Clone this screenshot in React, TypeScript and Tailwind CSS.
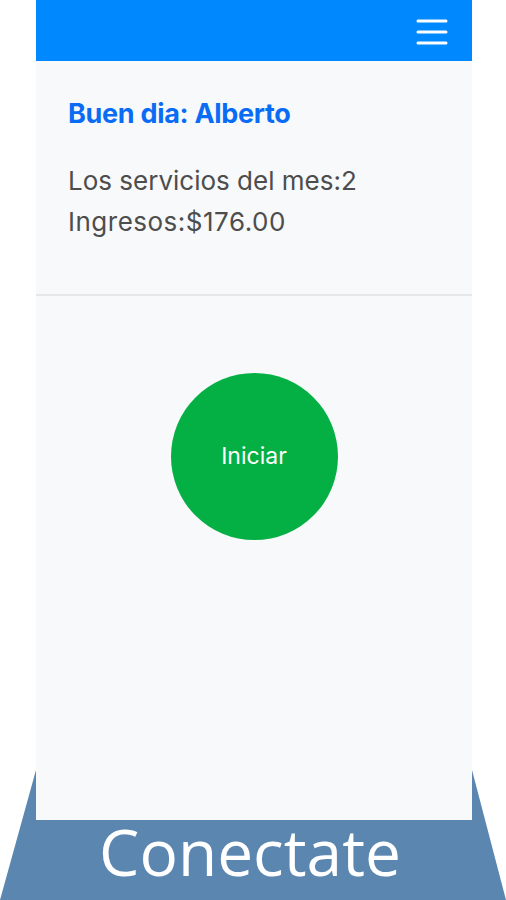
import React from "react";

export default function App() {
  return (
    <div className="relative w-[506px] h-[900px] bg-white overflow-hidden" style={{ fontFamily: 'Inter, "Liberation Sans", Arial, sans-serif' }}>
      <svg className="absolute left-0 top-0" width="506" height="900" viewBox="0 0 506 900">
        <polygon points="36,770 472,770 506,900 0,900" fill="#5a86b0" />
      </svg>
      <div className="relative flex flex-col">
        <div className="ml-[36px] w-[436px] h-[820px] bg-[#f8f9fb] flex flex-col">
          <div className="h-[61px] bg-[#0088ff] flex items-center justify-end pr-[24px] shrink-0">
            <svg width="32" height="28" viewBox="0 0 32 28">
              <g stroke="white" strokeWidth="3" strokeLinecap="round">
                <line x1="2" y1="4" x2="30" y2="4" />
                <line x1="2" y1="15" x2="30" y2="15" />
                <line x1="2" y1="26" x2="30" y2="26" />
              </g>
            </svg>
          </div>
          <div className="h-[235px] border-b-2 border-[#e6e7e9] px-[32px] pt-[38px] flex flex-col shrink-0">
            <div className="text-[27px] font-bold text-[#0a6cf5] leading-[30px] tracking-[-0.3px]">Buen dia: Alberto</div>
            <div className="mt-[31px] text-[26px] text-[#4d4d4d] leading-[41px]">Los servicios del mes:2</div>
            <div className="text-[26px] text-[#4d4d4d] leading-[41px] tracking-[0.5px]">Ingresos:$176.00</div>
          </div>
          <div className="flex justify-center pt-[77px]">
            <div className="w-[167px] h-[167px] rounded-full bg-[#04b043] flex items-center justify-center text-white text-[23px]">
              Iniciar
            </div>
          </div>
        </div>
        <div className="h-[80px] flex items-start justify-center">
          <span className="text-white text-[64px] leading-[70px] mt-[-3px] mr-[6px]" style={{ fontFamily: '"Open Sans", sans-serif' }}>Conectate</span>
        </div>
      </div>
    </div>
  );
}
